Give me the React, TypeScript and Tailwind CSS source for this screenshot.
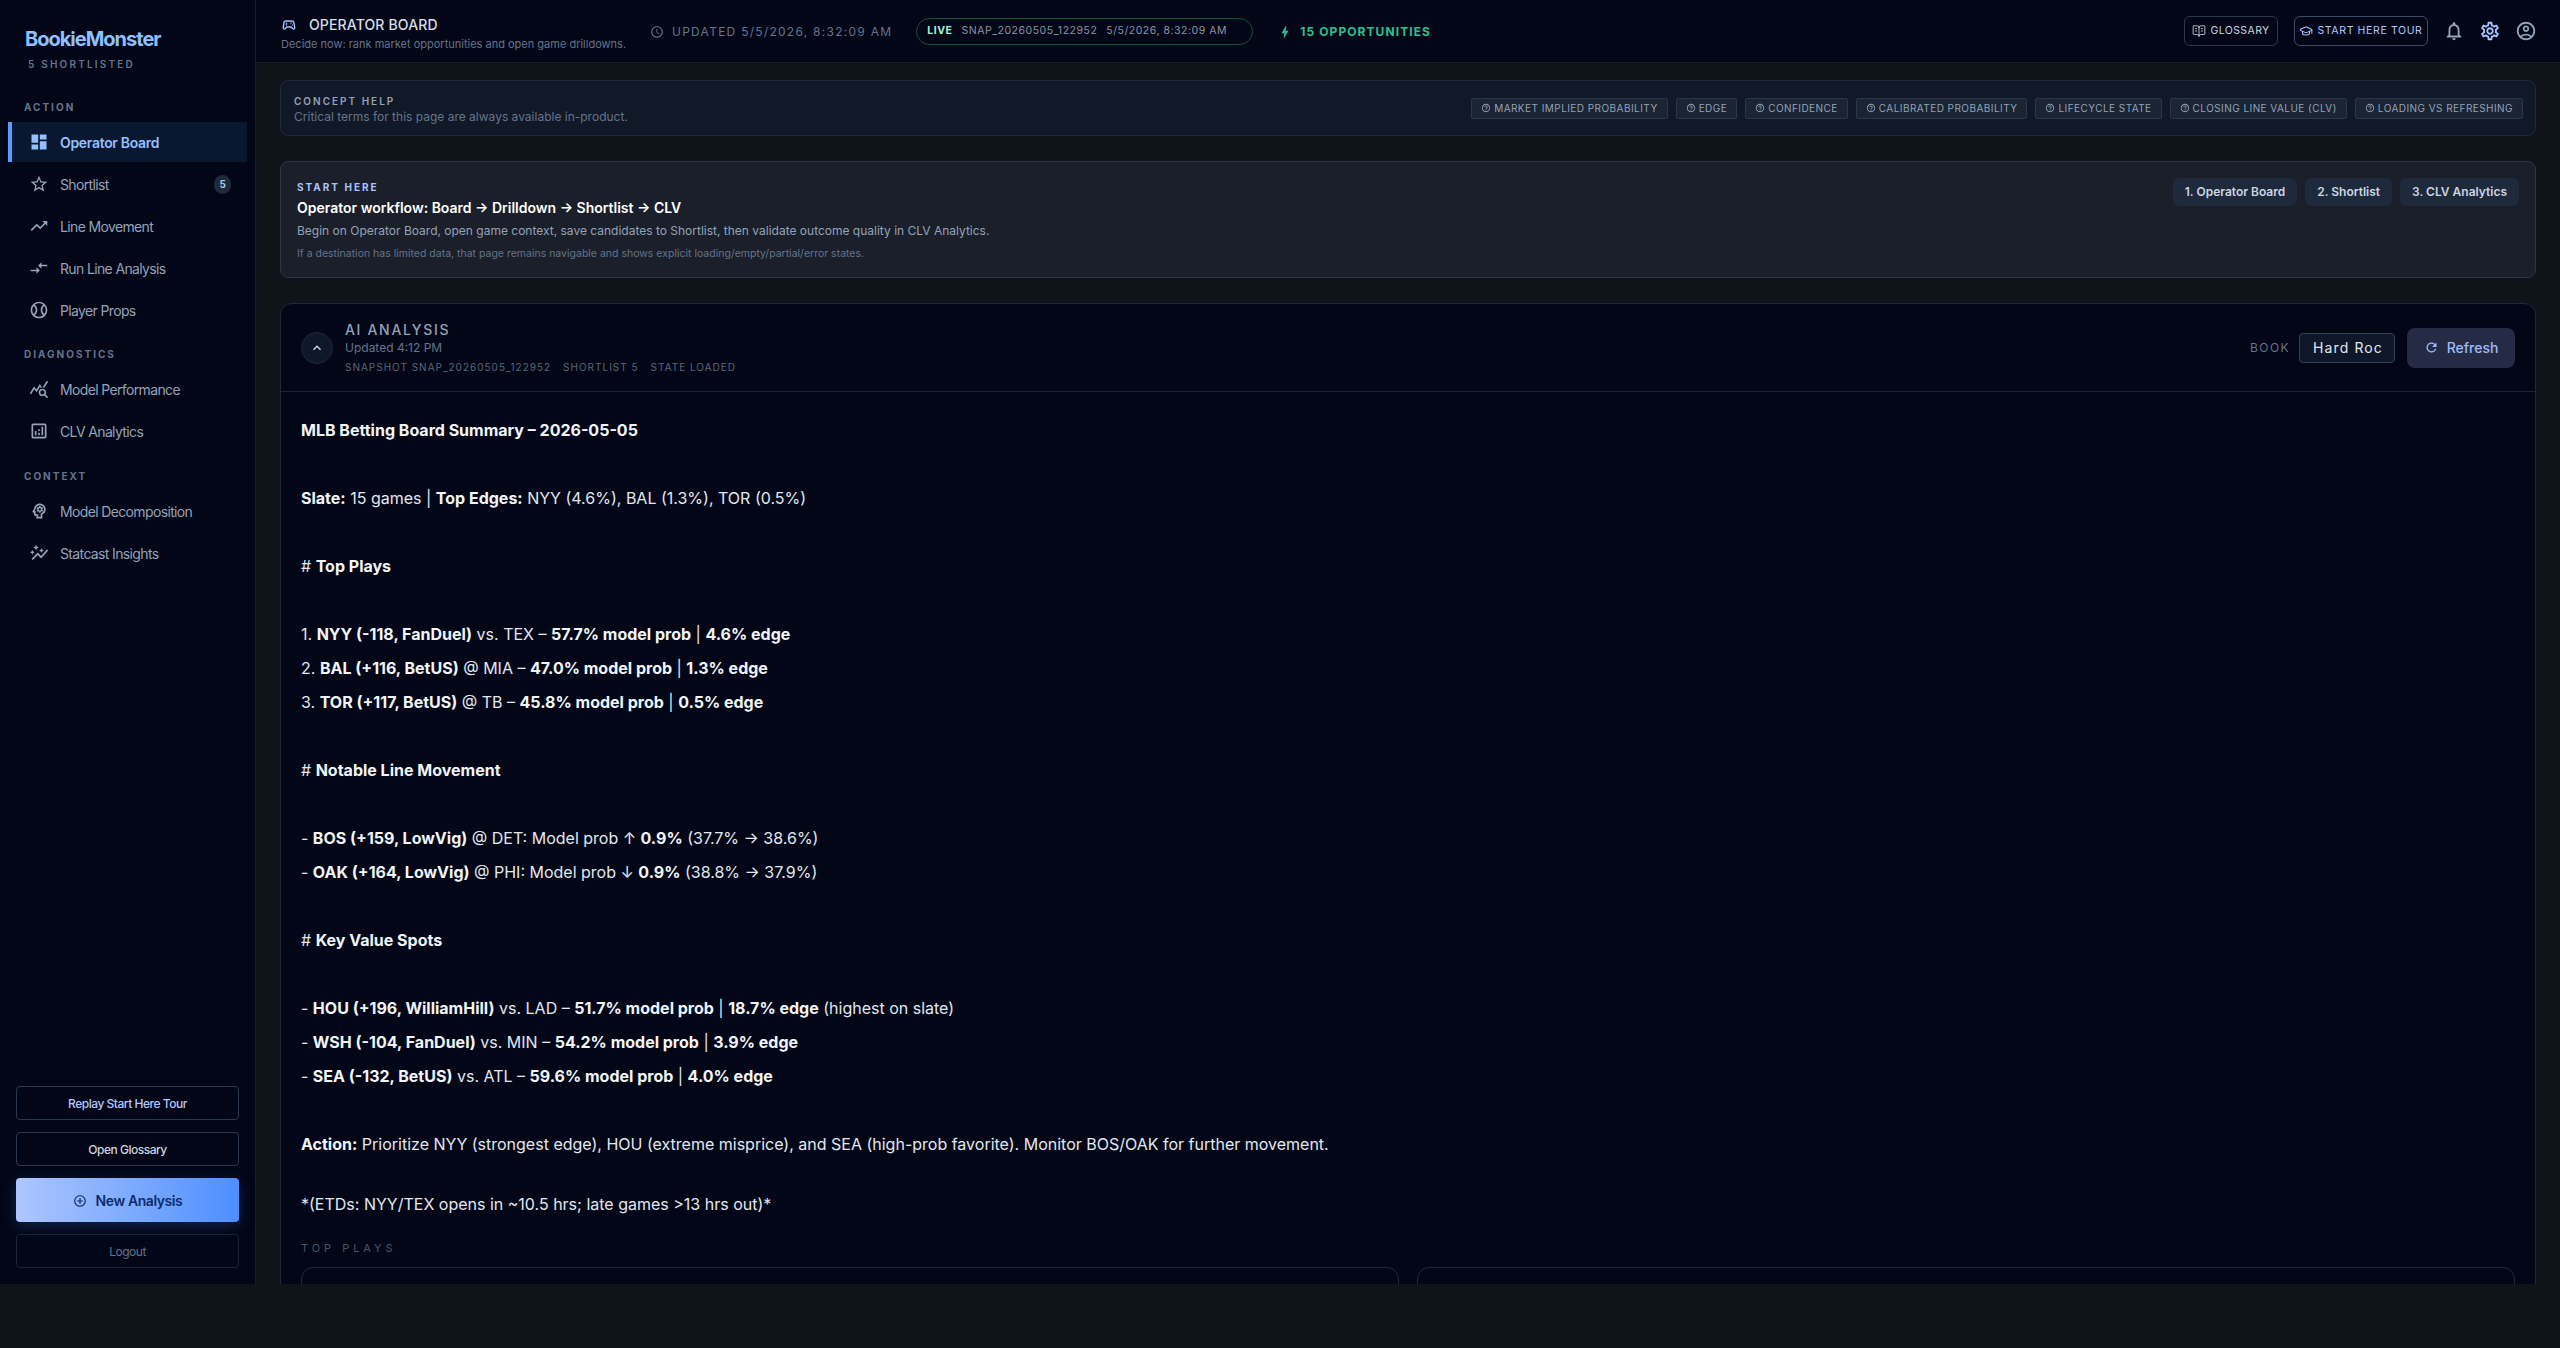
import React from 'react';
import { BookOpenText, GraduationCap } from 'lucide-react';
import {
  MdDashboard, MdOutlineStarBorder, MdTrendingUp, MdCompareArrows, MdOutlineSportsBaseball,
  MdQueryStats, MdOutlineAnalytics, MdOutlinePsychology, MdAutoGraph, MdOutlineSportsEsports,
  MdOutlineSchedule, MdOutlineBolt, MdOutlineNotifications,
  MdOutlineSettings, MdOutlineAccountCircle, MdHelpOutline, MdOutlineAddCircleOutline, MdRefresh,
  MdExpandLess,
} from 'react-icons/md';

const actionNav = [
  { label: 'Operator Board', icon: MdDashboard, active: true },
  { label: 'Shortlist', icon: MdOutlineStarBorder, badge: '5' },
  { label: 'Line Movement', icon: MdTrendingUp },
  { label: 'Run Line Analysis', icon: MdCompareArrows },
  { label: 'Player Props', icon: MdOutlineSportsBaseball },
];
const diagnosticsNav = [
  { label: 'Model Performance', icon: MdQueryStats },
  { label: 'CLV Analytics', icon: MdOutlineAnalytics },
];
const contextNav = [
  { label: 'Model Decomposition', icon: MdOutlinePsychology },
  { label: 'Statcast Insights', icon: MdAutoGraph },
];
const concepts = [
  'Market Implied Probability', 'Edge', 'Confidence', 'Calibrated Probability',
  'Lifecycle State', 'Closing Line Value (CLV)', 'Loading vs Refreshing',
];

const NavItem = ({ item }: { item: any }) => {
  const Icon = item.icon;
  return (
    <div className={`flex h-10 items-center pr-4 ${item.active ? 'border-l-4 border-[#5b9dff] bg-[#0a1730] pl-[17px] font-semibold tracking-[-0.02em] text-[#93c0ff]' : 'pl-[21px] tracking-[-0.04em] text-[#94a3b8]'}`}>
      <Icon className="h-5 w-5 shrink-0" />
      <span className="ml-[11px] text-[14px]">{item.label}</span>
      {item.badge && (
        <span className="ml-auto flex h-[19px] w-[17px] items-center justify-center rounded-full bg-[#1e293b] text-[10px] font-bold text-[#a5c4f5]">{item.badge}</span>
      )}
    </div>
  );
};

const NavLabel = ({ children, className }: { children: string; className: string }) => (
  <div className={`px-4 text-[10px] leading-[14px] font-bold tracking-[0.2em] text-[#64748b] uppercase ${className}`}>{children}</div>
);

const Sidebar = () => (
  <aside className="flex w-[256px] shrink-0 flex-col border-r border-[#151c2b] bg-[#020617] pr-2 pb-4 pl-2">
    <div className="pt-[25px] pl-[17px] text-[20px] leading-7 font-bold tracking-[-0.05em] text-[#8fc0ff]">BookieMonster</div>
    <div className="mt-[4px] pl-[20px] text-[10px] leading-[14px] font-semibold tracking-[0.22em] text-[#64748b]">5 SHORTLISTED</div>
    <NavLabel className="mt-[29px] mb-2">Action</NavLabel>
    <div className="flex flex-col gap-[2px]">{actionNav.map((i) => <NavItem key={i.label} item={i} />)}</div>
    <NavLabel className="mt-[17px] mb-[8px]">Diagnostics</NavLabel>
    <div className="flex flex-col gap-[2px]">{diagnosticsNav.map((i) => <NavItem key={i.label} item={i} />)}</div>
    <NavLabel className="mt-[18px] mb-[8px]">Context</NavLabel>
    <div className="flex flex-col gap-[2px]">{contextNav.map((i) => <NavItem key={i.label} item={i} />)}</div>

    <div className="mt-auto flex flex-col gap-3 px-2">
      <button className="h-[34px] rounded border border-[#2a3850] pt-[1px] text-[12px] font-medium tracking-[-0.04em] text-[#b4c8ff]">Replay Start Here Tour</button>
      <button className="h-[34px] rounded border border-[#2a3850] pt-[1px] text-[12px] font-medium tracking-[-0.04em] text-[#cbd5e1]">Open Glossary</button>
      <button className="flex h-[44px] items-center justify-center gap-[9px] rounded bg-gradient-to-r from-[#adc6ff] to-[#4d8eff] pt-[1px] text-[14px] font-semibold tracking-[-0.03em] text-[#0b2d6b] shadow-[0_4px_16px_rgba(77,142,255,0.22)]">
        <MdOutlineAddCircleOutline className="h-[14px] w-[14px]" />
        New Analysis
      </button>
      <button className="h-[34px] rounded border border-[#1a2436] pt-[1px] text-[12px] tracking-[-0.04em] text-[#64748b]">Logout</button>
    </div>
  </aside>
);

const Header = () => (
  <header className="flex h-[63px] shrink-0 items-center border-b border-[#151b28] bg-[#020617] pr-[23px] pl-6">
    <div className="w-[370px] pt-[5px]">
      <div className="flex items-center gap-[12px] pl-[1px]">
        <MdOutlineSportsEsports className="h-[16px] w-[16px] text-[#a9c4ff]" />
        <span className="text-[14px] leading-5 font-medium tracking-[0.01em] text-[#d8dfe9]">OPERATOR BOARD</span>
      </div>
      <div className="pl-[1px] text-[11px] leading-[18px] text-[#64748b]">Decide now: rank market opportunities and open game drilldowns.</div>
    </div>
    <div className="flex items-center gap-[8px] pt-[1px] text-[#64748b]">
      <MdOutlineSchedule className="h-[14px] w-[14px]" />
      <span className="text-[12px] tracking-[0.105em]">UPDATED 5/5/2026, 8:32:09 AM</span>
    </div>
    <div className="ml-[24px] flex h-[27px] w-[337px] items-center rounded-full border border-[#14532d] pl-[10px] text-[10.5px] tracking-[0.05em] text-[#8b95a7]">
      <span className="font-bold text-[#a7f3d0]">LIVE</span>
      <span className="ml-[9px]">SNAP_20260505_122952</span>
      <span className="ml-[9px]">5/5/2026, 8:32:09 AM</span>
    </div>
    <div className="ml-[24px] flex items-center gap-[7px] pt-[1px] text-[#2bc08f]">
      <MdOutlineBolt className="h-[16px] w-[16px]" />
      <span className="text-[12px] font-bold tracking-[0.09em]">15 OPPORTUNITIES</span>
    </div>
    <div className="ml-auto flex items-center">
      <button className="flex h-[30px] w-[94px] items-center justify-center gap-[4px] rounded-md border border-[#2a3850] text-[10.5px] tracking-[0.04em] text-[#cbd5e1]">
        <BookOpenText className="h-[14px] w-[14px]" strokeWidth={1.5} />
        GLOSSARY
      </button>
      <button className="ml-4 flex h-[30px] w-[134px] items-center justify-center gap-[4px] rounded-md border border-[#3b4a6b] text-[10.5px] tracking-[0.06em] text-[#b4c8ff]">
        <GraduationCap className="h-[14px] w-[14px]" strokeWidth={1.75} />
        START HERE TOUR
      </button>
      <MdOutlineNotifications className="ml-[15px] h-[22px] w-[22px] text-[#94a3b8]" />
      <MdOutlineSettings className="ml-[14px] h-[22px] w-[22px] text-[#a9c4ff]" />
      <MdOutlineAccountCircle className="ml-[14px] h-[22px] w-[22px] text-[#94a3b8]" />
    </div>
  </header>
);

const ConceptHelp = () => (
  <section className="flex h-[56px] shrink-0 items-center justify-between rounded-lg border border-[#1e293b] bg-[#111827] pr-[12px] pl-[13px]">
    <div className="pt-[2px]">
      <div className="text-[10px] leading-[14px] font-semibold tracking-[0.2em] text-[#94a3b8]">CONCEPT HELP</div>
      <div className="mt-[1px] text-[12px] leading-4 text-[#64748b]">Critical terms for this page are always available in-product.</div>
    </div>
    <div className="flex gap-2">
      {concepts.map((c) => (
        <span key={c} className="flex h-[21px] items-center gap-[3px] rounded-[2px] border border-[#2b3748] bg-[#1a2433] px-[9px] text-[10px] tracking-[0.045em] text-[#94a3b8] uppercase">
          <MdHelpOutline className="h-[10px] w-[10px]" />
          {c}
        </span>
      ))}
    </div>
  </section>
);

const StartHere = () => (
  <section className="mt-[25px] flex h-[117px] shrink-0 justify-between rounded-lg border border-[#2d3648] bg-[#1a1f2a] pt-4 pr-4 pl-4">
    <div>
      <div className="text-[10px] leading-[18px] font-bold tracking-[0.2em] text-[#a9c4ff]">START HERE</div>
      <div className="mt-[2px] text-[14px] leading-5 font-semibold text-white">Operator workflow: Board → Drilldown → Shortlist → CLV</div>
      <div className="mt-[3px] text-[12px] leading-[20px] text-[#94a3b8]">Begin on Operator Board, open game context, save candidates to Shortlist, then validate outcome quality in CLV Analytics.</div>
      <div className="mt-[5px] text-[10.5px] leading-[16px] text-[#64748b]">If a destination has limited data, that page remains navigable and shows explicit loading/empty/partial/error states.</div>
    </div>
    <div className="flex gap-2">
      {['1. Operator Board', '2. Shortlist', '3. CLV Analytics'].map((s) => (
        <span key={s} className="flex h-[28px] items-center rounded-md bg-[#1e293b] px-3 text-[12px] font-semibold text-[#cbd5e1]">{s}</span>
      ))}
    </div>
  </section>
);

const Line = ({ children, className = '' }: { children?: React.ReactNode; className?: string }) => (
  <p className={`h-[34px] text-[16px] leading-[34px] text-[#e2e8f0] [&_b]:font-bold [&_b]:text-[#f1f5f9] ${className}`}>{children}</p>
);

const AiAnalysis = () => (
  <section className="mt-[25px] shrink-0 rounded-t-xl border border-[#1e293b] bg-[#020617]">
    <div className="flex h-[88px] items-center border-b border-[#1a2233] pr-[20px] pl-[20px]">
      <div className="flex h-8 w-8 items-center justify-center rounded-full border border-[#1e293b] bg-[#0f172a] text-[#cbd5e1]">
        <MdExpandLess className="h-4 w-4" />
      </div>
      <div className="ml-3 pt-[2px]">
        <div className="text-[14px] leading-[18px] font-medium tracking-[0.12em] text-[#94a3b8]">AI ANALYSIS</div>
        <div className="text-[12px] leading-[18px] text-[#64748b]">Updated 4:12 PM</div>
        <div className="flex gap-[12px] text-[10px] leading-[20px] tracking-[0.1em] text-[#5b6779]">
          <span>SNAPSHOT SNAP_20260505_122952</span>
          <span>SHORTLIST 5</span>
          <span>STATE LOADED</span>
        </div>
      </div>
      <div className="ml-auto flex items-center">
        <span className="text-[12px] tracking-[0.12em] text-[#64748b]">BOOK</span>
        <div className="ml-[9px] flex h-[30px] w-[96px] items-center overflow-hidden rounded border border-[#334155] bg-[#0f172a] pl-[13px] text-[14px] tracking-[0.08em] whitespace-nowrap text-[#e2e8f0]">Hard Roc</div>
        <button className="ml-3 flex h-10 w-[108px] items-center justify-center gap-[8px] rounded-lg bg-[#252b45] text-[14px] font-medium text-[#9dbcf7]">
          <MdRefresh className="h-[15px] w-[15px]" />
          Refresh
        </button>
      </div>
    </div>
    <div className="px-[20px] pt-[21px]">
      <Line><b>MLB Betting Board Summary – 2026-05-05</b></Line>
      <Line />
      <Line><b>Slate:</b> 15 games | <b>Top Edges:</b> NYY (4.6%), BAL (1.3%), TOR (0.5%)</Line>
      <Line />
      <Line># <b>Top Plays</b></Line>
      <Line />
      <Line>1. <b>NYY (-118, FanDuel)</b> vs. TEX – <b>57.7% model prob</b> | <b>4.6% edge</b></Line>
      <Line>2. <b>BAL (+116, BetUS)</b> @ MIA – <b>47.0% model prob</b> | <b>1.3% edge</b></Line>
      <Line>3. <b>TOR (+117, BetUS)</b> @ TB – <b>45.8% model prob</b> | <b>0.5% edge</b></Line>
      <Line />
      <Line># <b>Notable Line Movement</b></Line>
      <Line />
      <Line>- <b>BOS (+159, LowVig)</b> @ DET: Model prob ↑ <b>0.9%</b> (37.7% → 38.6%)</Line>
      <Line>- <b>OAK (+164, LowVig)</b> @ PHI: Model prob ↓ <b>0.9%</b> (38.8% → 37.9%)</Line>
      <Line />
      <Line># <b>Key Value Spots</b></Line>
      <Line />
      <Line>- <b>HOU (+196, WilliamHill)</b> vs. LAD – <b>51.7% model prob</b> | <b>18.7% edge</b> (highest on slate)</Line>
      <Line>- <b>WSH (-104, FanDuel)</b> vs. MIN – <b>54.2% model prob</b> | <b>3.9% edge</b></Line>
      <Line>- <b>SEA (-132, BetUS)</b> vs. ATL – <b>59.6% model prob</b> | <b>4.0% edge</b></Line>
      <Line />
      <Line><b>Action:</b> Prioritize NYY (strongest edge), HOU (extreme misprice), and SEA (high-prob favorite). Monitor BOS/OAK for further movement.</Line>
      <Line className="mt-[26px]">*(ETDs: NYY/TEX opens in ~10.5 hrs; late games &gt;13 hrs out)*</Line>
      <div className="mt-[20px] text-[11px] leading-[14px] tracking-[0.36em] text-[#475569]">TOP PLAYS</div>
      <div className="mt-[12px] grid grid-cols-2 gap-[18px]">
        <div className="h-[200px] rounded-xl border border-[#1e293b]" />
        <div className="h-[200px] rounded-xl border border-[#1e293b]" />
      </div>
    </div>
  </section>
);

export default function App() {
  return (
    <div className="h-[1348px] overflow-hidden bg-[#0f141b] font-['Inter',sans-serif]">
      <div className="flex h-[1284px] overflow-hidden">
        <Sidebar />
        <main className="flex min-w-0 flex-1 flex-col">
          <Header />
          <div className="flex min-h-0 flex-1 flex-col overflow-hidden px-6 pt-[17px]">
            <ConceptHelp />
            <StartHere />
            <AiAnalysis />
          </div>
        </main>
      </div>
    </div>
  );
}
